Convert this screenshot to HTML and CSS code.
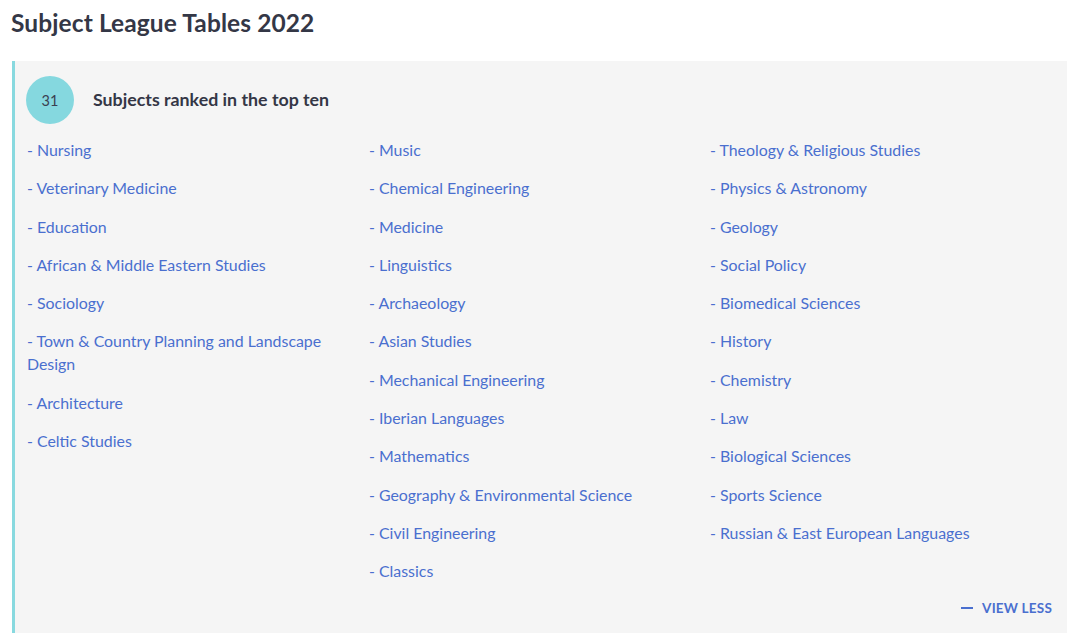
FILE: index.html
```html
<!DOCTYPE html>
<html lang="en">
<head>
<meta charset="utf-8">
<title>Subject League Tables 2022</title>
<link rel="stylesheet" href="styles.css">
</head>
<body>
<h1 class="title">Subject League Tables 2022</h1>
<section class="panel">
  <div class="panel-head">
    <span class="count">31</span>
    <h2 class="head-text">Subjects ranked in the top ten</h2>
  </div>
  <div class="cols">
    <ul class="col">
      <li><a href="#">- Nursing</a></li>
      <li><a href="#">- Veterinary Medicine</a></li>
      <li><a href="#">- Education</a></li>
      <li><a href="#">- African &amp; Middle Eastern Studies</a></li>
      <li><a href="#">- Sociology</a></li>
      <li><a href="#">- Town &amp; Country Planning and Landscape Design</a></li>
      <li><a href="#">- Architecture</a></li>
      <li><a href="#">- Celtic Studies</a></li>
    </ul>
    <ul class="col">
      <li><a href="#">- Music</a></li>
      <li><a href="#">- Chemical Engineering</a></li>
      <li><a href="#">- Medicine</a></li>
      <li><a href="#">- Linguistics</a></li>
      <li><a href="#">- Archaeology</a></li>
      <li><a href="#">- Asian Studies</a></li>
      <li><a href="#">- Mechanical Engineering</a></li>
      <li><a href="#">- Iberian Languages</a></li>
      <li><a href="#">- Mathematics</a></li>
      <li><a href="#">- Geography &amp; Environmental Science</a></li>
      <li><a href="#">- Civil Engineering</a></li>
      <li><a href="#">- Classics</a></li>
    </ul>
    <ul class="col">
      <li><a href="#">- Theology &amp; Religious Studies</a></li>
      <li><a href="#">- Physics &amp; Astronomy</a></li>
      <li><a href="#">- Geology</a></li>
      <li><a href="#">- Social Policy</a></li>
      <li><a href="#">- Biomedical Sciences</a></li>
      <li><a href="#">- History</a></li>
      <li><a href="#">- Chemistry</a></li>
      <li><a href="#">- Law</a></li>
      <li><a href="#">- Biological Sciences</a></li>
      <li><a href="#">- Sports Science</a></li>
      <li><a href="#">- Russian &amp; East European Languages</a></li>
    </ul>
  </div>
  <div class="panel-foot">
    <a href="#" class="view-less"><span class="dash"></span>VIEW LESS</a>
  </div>
</section>
</body>
</html>
```
FILE: styles.css
```css
html, body {
  margin: 0;
  padding: 0;
  background: #ffffff;
}
body {
  font-family: "Lato", "Open Sans", sans-serif;
  color: #343746;
  padding: 0 13px 0 12px;
}
.title {
  margin: 0;
  padding: 8px 0 0 0;
  font-size: 24.5px;
  line-height: 30px;
  font-weight: 700;
  color: #343746;
  margin-left: -1px;
  letter-spacing: 0.1px;
}
.panel {
  margin-top: 23px;
  background: #f5f5f5;
  border-left: 3px solid #88d9df;
  padding: 15px 15px 0 11px;
  height: 572px;
  box-sizing: border-box;
}
.panel-head {
  display: flex;
  align-items: center;
  gap: 19px;
}
.count {
  width: 48px;
  height: 48px;
  border-radius: 50%;
  background: #85d8df;
  display: flex;
  align-items: center;
  justify-content: center;
  font-size: 14.5px;
  color: #3b3f51;
}
.head-text {
  margin: 0 0 2px 0;
  font-size: 17.8px;
  font-weight: 700;
  color: #343746;
}
.cols {
  display: grid;
  grid-template-columns: 342px 341px 1fr;
  margin-top: 14px;
  padding-left: 1px;
}
.col {
  list-style: none;
  margin: 0;
  padding: 0;
  display: flex;
  flex-direction: column;
  gap: 15.3px;
}
.col li {
  font-size: 15.9px;
  line-height: 23px;
  max-width: 310px;
}
.col a {
  color: #4a6fcf;
  text-decoration: none;
}
.panel-foot {
  display: flex;
  justify-content: flex-end;
  margin-top: 18px;
}
.view-less {
  display: flex;
  align-items: center;
  gap: 9px;
  font-size: 13.5px;
  font-weight: 700;
  color: #4a6fcf;
  text-decoration: none;
  letter-spacing: 0.2px;
}
.dash {
  width: 12px;
  height: 2px;
  background: #4a6fcf;
}
```
